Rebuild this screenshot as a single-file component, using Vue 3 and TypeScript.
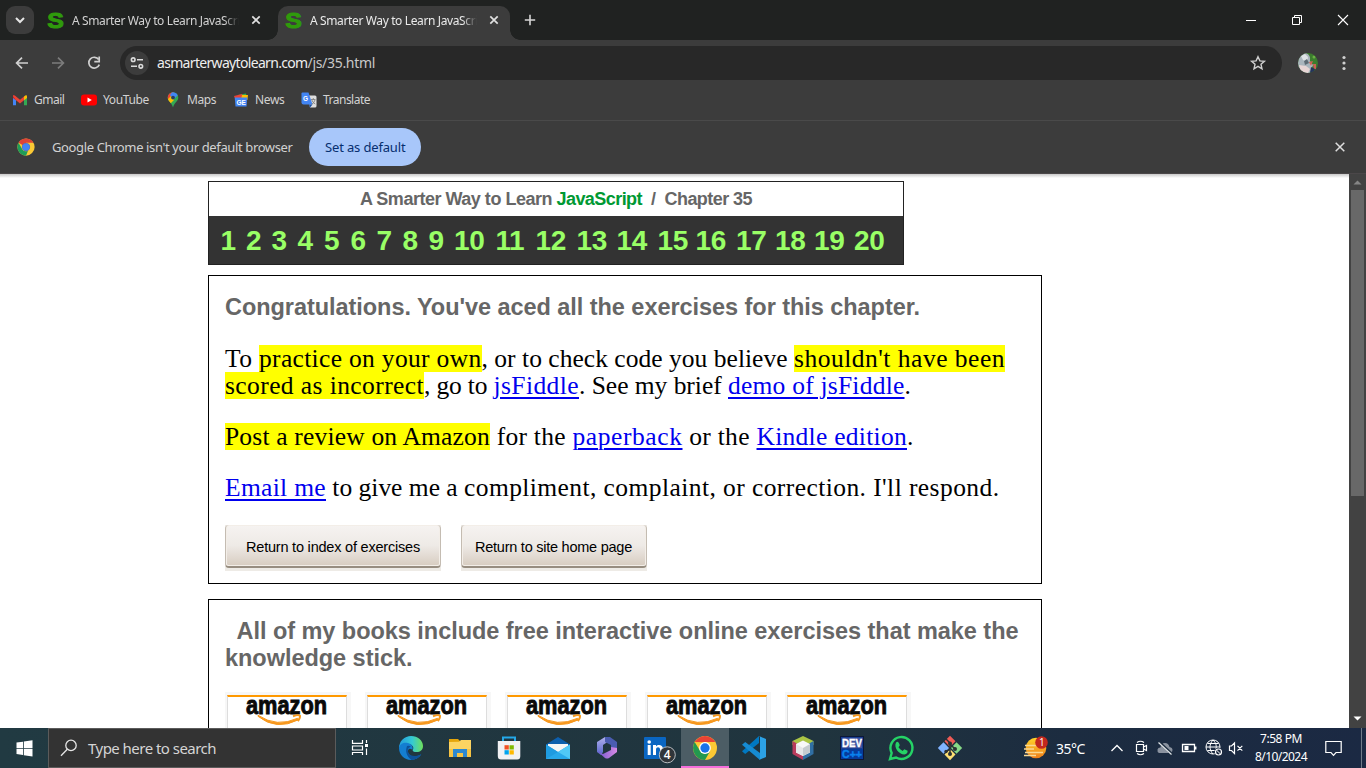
<script setup lang="ts">
import type { Directive } from 'vue'

/* Spreads the letters of a single-line run so that it takes the given width. */
const vFit: Directive<HTMLElement, number> = {
  mounted(el, binding) {
    const natural = el.getBoundingClientRect().width
    const count = (el.textContent || '').length
    if (count > 0) el.style.letterSpacing = `${(binding.value - natural) / count}px`
  },
}

interface Run { t: string; w: number; k?: 'mark' | 'link' }
const paragraphs: Run[][][] = [
  [
    [
      { t: 'To ', w: 34 },
      { t: 'practice on your own', w: 222.5, k: 'mark' },
      { t: ', or to check code you believe ', w: 312.5 },
      { t: "shouldn't have been", w: 211, k: 'mark' },
    ],
    [
      { t: 'scored as incorrect', w: 199, k: 'mark' },
      { t: ', go to ', w: 69.5 },
      { t: 'jsFiddle', w: 85.5, k: 'link' },
      { t: '. See my brief ', w: 149 },
      { t: 'demo of jsFiddle', w: 176.5, k: 'link' },
      { t: '.', w: 6 },
    ],
  ],
  [
    [
      { t: 'Post a review on Amazon', w: 265, k: 'mark' },
      { t: ' for the ', w: 82.5 },
      { t: 'paperback', w: 110, k: 'link' },
      { t: ' or the ', w: 74 },
      { t: 'Kindle edition', w: 150.5, k: 'link' },
      { t: '.', w: 6 },
    ],
  ],
  [
    [
      { t: 'Email me', w: 101, k: 'link' },
      { t: ' to give me a ', w: 138 },
      { t: 'compliment, complaint, ', w: 259 },
      { t: "or correction. I'll respond.", w: 276.5 },
    ],
  ],
]

const numberWidths = [25.5, 25.5, 26, 26.5, 26.5, 26, 26, 26, 25.5, 41.5, 40, 41, 40, 41, 38, 40.5, 39, 39, 40, 32]
const tabTitle = 'A Smarter Way to Learn JavaScript'
const cards = [1, 2, 3, 4, 5]
</script>

<template>
  <div class="screen">
    <header class="tabs">
      <div class="tabsearch"><svg width="28" height="28" viewBox="0 0 28 28"><path d="M10 12l4 4 4-4" fill="none" stroke="#e6e6e6" stroke-width="2" /></svg></div>
      <div v-for="n in 2" :key="n" class="tab" :class="{ active: n === 2 }">
        <svg class="fav" width="17" height="18" viewBox="0 0 17 18"><text x="0.2" y="16.6" font-family="Liberation Sans, sans-serif" font-weight="700" font-size="21.5" textLength="16.6" lengthAdjust="spacingAndGlyphs" fill="#2f9a0c" stroke="#2f9a0c" stroke-width="1">S</text></svg>
        <div class="title"><span v-fit="179">{{ tabTitle }}</span></div>
        <svg class="tabx" width="10" height="10" viewBox="0 0 10 10"><path d="M1.3 1.3l7.4 7.4M8.7 1.3L1.3 8.7" stroke="#e0e0e0" stroke-width="1.7" /></svg>
      </div>
      <svg class="plus" width="12" height="12" viewBox="0 0 12 12"><path d="M6 .8v10.4M.8 6h10.4" stroke="#d6d6d6" stroke-width="1.6" /></svg>
      <div class="win">
        <svg width="12" height="12" viewBox="0 0 12 12"><path d="M1 6.5h10" stroke="#fff" /></svg>
        <svg width="12" height="12" viewBox="0 0 12 12"><path d="M1.5 3.5h7v7h-7zM3.5 3.5v-2h7v7h-2" fill="none" stroke="#fff" /></svg>
        <svg width="12" height="12" viewBox="0 0 12 12"><path d="M1 1l10 10M11 1L1 11" stroke="#fff" stroke-width="1.1" /></svg>
      </div>
    </header>

    <div class="toolbar">
      <svg class="b1" width="16" height="16" viewBox="0 0 16 16"><path d="M14 8H3M8 2.6L2.6 8 8 13.4" fill="none" stroke="#d0d0d0" stroke-width="1.7" /></svg>
      <svg class="b2" width="16" height="16" viewBox="0 0 16 16"><path d="M2 8h11M8 2.6L13.4 8 8 13.4" fill="none" stroke="#7c7c7c" stroke-width="1.7" /></svg>
      <svg class="b3" width="16" height="16" viewBox="0 0 16 16"><path d="M12.7 4.6A5.4 5.4 0 1 0 13.3 9.6" fill="none" stroke="#d0d0d0" stroke-width="1.7" /><path d="M13.2 1.6v5H8.3" fill="none" stroke="#d0d0d0" stroke-width="1.7" /></svg>
      <div class="omni">
        <div class="site"><svg width="16" height="16" viewBox="0 0 16 16" fill="none" stroke="#dadada" stroke-width="1.6"><circle cx="4.2" cy="4.7" r="1.8" /><path d="M8 4.7h6M2 11.3h6" /><circle cx="11.8" cy="11.3" r="1.8" /></svg></div>
        <div class="url"><span v-fit="150.5">asmarterwaytolearn.com</span><span v-fit="67.5" class="path">/js/35.html</span></div>
        <svg class="star" width="16" height="16" viewBox="0 0 16 16"><path d="M8 1.7l1.9 4.2 4.5.4-3.4 3 1 4.5L8 11.4l-4 2.4 1-4.5-3.4-3 4.5-.4z" fill="none" stroke="#d0d0d0" stroke-width="1.4" /></svg>
      </div>
      <svg class="avatar" width="20" height="20" viewBox="0 0 20 20">
        <defs><clipPath id="av"><circle cx="10" cy="10" r="10" /></clipPath></defs>
        <g clip-path="url(#av)"><rect width="20" height="20" fill="#3c7d2e" /><path d="M0 0h8q5 2 4 8l3 4-3 8H0z" fill="#aab5bd" /><path d="M3 3l4-2 3 3-1 5-4-2z" fill="#dfe3e6" /><path d="M6 8l3-2 2 4-4 2z" fill="#5e6b75" /><path d="M1 12l7 1 4 3-2 4H3z" fill="#e8d5d5" /><path d="M11 9l4-1-2 5zM15 11h3v5h-2z" fill="#cd6155" /><path d="M13 14l4 2-2 4h-3z" fill="#25335c" /><circle cx="16" cy="4" r="1.5" fill="#6bb045" /></g>
      </svg>
      <svg class="dots" width="4" height="16" viewBox="0 0 4 16" fill="#d0d0d0"><circle cx="2" cy="2.5" r="1.6" /><circle cx="2" cy="8" r="1.6" /><circle cx="2" cy="13.5" r="1.6" /></svg>
    </div>

    <div class="marks">
      <div class="bm gm"><svg width="16" height="16" viewBox="0 0 16 16"><path d="M1 3.2v10h3V7z" fill="#4285f4" /><path d="M15 3.2v10h-3V7z" fill="#34a853" /><path d="M1 3v3l3 2.3V4.8z" fill="#c5221f" /><path d="M1 4.2Q1 2.5 2.8 3.6L8 7.7l4-3.1v3.7l-4 3.1-4-3.1z" fill="#ea4335" /><path d="M12 4.6l1.2-1Q15 2.8 15 4.7V6l-3 2.3z" fill="#fbbc04" /></svg><span v-fit="30.5">Gmail</span></div>
      <div class="bm yt"><svg width="16" height="16" viewBox="0 0 16 16"><rect x="0" y="2.5" width="16" height="11" rx="3" fill="#f00" /><path d="M6.5 5.5v5L10.8 8z" fill="#fff" /></svg><span v-fit="46">YouTube</span></div>
      <div class="bm mp"><svg width="16" height="16" viewBox="0 0 16 16"><defs><clipPath id="pin"><path d="M8 .3a5.3 5.3 0 0 0-5.3 5.3c0 4 3.9 4.7 5.3 10 1.4-5.3 5.3-6 5.3-10A5.3 5.3 0 0 0 8 .3z" /></clipPath></defs><g clip-path="url(#pin)"><path d="M0 0h16v16H0z" fill="#34a853" /><path d="M0 0h9L4 7 0 8z" fill="#ea4335" /><path d="M7 0h9L8 8 5 3z" fill="#4285f4" /><path d="M2 8l4-4 3 4-5 5z" fill="#fbbc04" /></g><circle cx="8" cy="5.6" r="1.9" fill="#263e63" /></svg><span v-fit="29">Maps</span></div>
      <div class="bm nw"><svg width="16" height="16" viewBox="0 0 16 16"><path d="M5 3l8-1.5 1 5H5z" fill="#34a853" /><path d="M1 4l8-2 2 6-8 1z" fill="#ea4335" /><path d="M9 3h6l-.6 5H8z" fill="#fbbc04" /><path d="M1.7 5.5h12.6l-.8 9h-11z" fill="#4285f4" /><text x="3.5" y="12.6" font-family="Liberation Sans" font-weight="700" font-size="6.5" fill="#fff">GE</text></svg><span v-fit="29.5">News</span></div>
      <div class="bm tr"><svg width="16" height="16" viewBox="0 0 16 16"><path d="M6 3.5h8q1.5 0 1.5 1.5v9q0 1.5-1.5 1.5H9z" fill="#dedede" /><path d="M.5 1.5Q.5.5 1.5.5h6l4 12h-9q-2 0-2-2z" fill="#4285f4" /><path d="M8 12.5h3.5L9 15.5z" fill="#174ea6" /><text x="2" y="8.6" font-family="Liberation Sans" font-weight="700" font-size="6.5" fill="#fff">G</text><path d="M10 7.5h4.5M12.3 6v1.5M10.8 8q1 3 3.5 4M14 8q-.8 3-3.4 4.3" stroke="#777" fill="none" stroke-width=".8" /></svg><span v-fit="47">Translate</span></div>
    </div>

    <div class="infobar">
      <svg width="18" height="18" viewBox="0 0 48 48"><circle cx="24" cy="24" r="23" fill="#fbc934" /><path d="M24 24L4.1 12.5A23 23 0 0 1 43.9 12.5H24z" fill="#dc4437" /><path d="M24 47A23 23 0 0 1 4.1 12.5L14 29.7Q18 36 24 35.5l5-1z" fill="#1e9d58" /><circle cx="24" cy="24" r="11" fill="#5b6fae" /><circle cx="24" cy="24" r="9.5" fill="#4285f4" /></svg>
      <div class="msg"><span v-fit="240.5">Google Chrome isn't your default browser</span></div>
      <div class="setdef"><span v-fit="80.5">Set as default</span></div>
      <svg class="infx" width="10" height="10" viewBox="0 0 10 10"><path d="M.7.7l8.6 8.6M9.3.7L.7 9.3" stroke="#dedede" stroke-width="1.5" /></svg>
    </div>

    <main class="page">
      <div class="doc">
        <div class="banner">
          <div class="booktitle"><span v-fit="196.5">A Smarter Way to Learn </span><span v-fit="85.5" class="green">JavaScript</span><span v-fit="22.5">&nbsp; / &nbsp;</span><span v-fit="87.5">Chapter 35</span></div>
          <div class="numbers"><span v-for="(w, i) in numberWidths" :key="i" :style="{ width: w + 'px' }">{{ i + 1 }}</span></div>
        </div>
        <section class="box first">
          <h2><span v-fit="695">Congratulations. You've aced all the exercises for this chapter.</span></h2>
          <div v-for="(p, pi) in paragraphs" :key="pi" class="para">
            <div v-for="(line, li) in p" :key="li" class="line">
              <span v-for="(r, ri) in line" :key="ri" v-fit="r.w" :class="r.k">{{ r.t }}</span>
            </div>
          </div>
          <div class="buttons">
            <div class="btn wide"><div><span v-fit="174">Return to index of exercises</span></div></div>
            <div class="btn"><div><span v-fit="157">Return to site home page</span></div></div>
          </div>
        </section>
        <section class="box second">
          <h2 class="indent"><span v-fit="782">All of my books include free interactive online exercises that make the</span></h2>
          <h2><span v-fit="187.5">knowledge stick.</span></h2>
          <div class="cards">
            <div v-for="c in cards" :key="c" class="card"><div class="inner">
              <svg width="118" height="50" viewBox="0 0 118 50"><text x="18" y="17" font-family="Liberation Sans, sans-serif" font-weight="700" font-size="25.5" textLength="81" lengthAdjust="spacingAndGlyphs" fill="#090909" stroke="#090909" stroke-width=".9">amazon</text><path d="M30 18.3Q49 30.8 69.5 21.3L70.5 22.8Q48 34 30 19.3z" fill="#f7981d" stroke="#f7981d" stroke-width="1" /><path d="M65 19.3q5.5-2 7-.5.5 2-2.2 5.3" fill="none" stroke="#f7981d" stroke-width="2" /></svg>
            </div></div>
          </div>
        </section>
      </div>
      <div class="scroll">
        <svg width="9" height="5" viewBox="0 0 9 5"><path d="M.5 4.5h8L4.5.5z" fill="#858585" /></svg>
        <div class="thumb"></div>
        <svg class="dn" width="9" height="5" viewBox="0 0 9 5"><path d="M.5.5h8l-4 4z" fill="#fff" /></svg>
      </div>
    </main>

    <footer class="task">
      <div class="start"><svg width="17" height="17" viewBox="0 0 17 17" fill="#fff"><path d="M.5 2.6L7 1.7v6.2H.5zM7.8 1.5L16.5.3v7.6H7.8zM.5 8.8H7V15l-6.5-.9zM7.8 8.8h8.7v7.6l-8.7-1.2z" /></svg></div>
      <div class="search"><svg width="18" height="18" viewBox="0 0 18 18" fill="none" stroke="#e6e6e6" stroke-width="1.3"><circle cx="11" cy="6.4" r="5.2" /><path d="M7.3 10.2L1 16.8" /></svg><span v-fit="128">Type here to search</span></div>
      <div class="tv"><svg width="18" height="18" viewBox="0 0 18 18" fill="none" stroke="#fff" stroke-width="1.2"><path d="M1.5 1v3.4h10V1M1.5 16v-2.5h10V16M1.5 7h10v4h-10zM15.5 1v3M15.5 9.5V16" /><path d="M14 5h3v3h-3z" fill="#fff" stroke="none" /></svg></div>
      <div class="apps">
        <div class="app"><svg width="24" height="24" viewBox="0 0 24 24"><defs><linearGradient id="eg" x1="0" x2="1"><stop offset="0" stop-color="#229bdd" /><stop offset=".55" stop-color="#35c9d4" /><stop offset="1" stop-color="#6fe05b" /></linearGradient></defs><path d="M0 12A12 12 0 0 1 12 0c7 0 12 4.6 12 10 0 4-3 6-6.3 6-3 0-4.4-1-4-2.1 2-3-1-6-4.7-6C4 7.9 1 10 0 12z" fill="url(#eg)" /><path d="M0 12c.5-4 5-6 9-5 3.5 1 5.6 4 4.4 6.8C10 11 8 14 9.4 17.3c1.7 4 7 4.9 12.9 1C20 22 16 24 12 24 5.4 24 0 18.6 0 12z" fill="#147ed1" /><path d="M8 10c-2 5-.5 10.4 4.5 13.9C16 24 20 22 22.3 18.3c-6 3-11 2-12.9-1.5C8 13.5 9.5 11 12 11q-2-2-4-1z" fill="#0d5199" /></svg></div>
        <div class="app"><svg width="24" height="24" viewBox="0 0 24 24"><path d="M1 3h9l2 2v3H1z" fill="#e5a50a" /><path d="M1 6l10-.2L13 4h10v17H1z" fill="#fcd462" /><path d="M1 13h22v8H1z" fill="#f5c343" /><path d="M5 21v-8h14v8h-4v-4H9v4z" fill="#2b88d0" /></svg></div>
        <div class="app"><svg width="24" height="24" viewBox="0 0 24 24"><path d="M6 7V1.5h12V7" fill="none" stroke="#24a8e8" stroke-width="2" /><path d="M.8 5h22.5v15q0 3.5-3 3.5H4q-3.2 0-3.2-3.5z" fill="#f1f1f3" /><path d="M7.5 9.2h4.3v4.3H7.5z" fill="#f25022" /><path d="M12.5 9.2h4.3v4.3h-4.3z" fill="#7fba00" /><path d="M7.5 14.2h4.3v4.3H7.5z" fill="#00a4ef" /><path d="M12.5 14.2h4.3v4.3h-4.3z" fill="#ffb900" /></svg></div>
        <div class="app"><svg width="24" height="24" viewBox="0 0 24 24"><path d="M0 8.5L12 1l12 7.5v6H0z" fill="#0d5fad" /><path d="M2 8h20v3l-10 6L2 11z" fill="#f5f5f5" /><path d="M0 8.5L12 16 24 8.5V23H0z" fill="#28a8ea" /><path d="M0 23L12 16 0 8.5z" fill="#1f9be0" /><path d="M24 8.5V23L12 16z" fill="#50c8f6" /></svg></div>
        <div class="app"><svg width="24" height="24" viewBox="0 0 24 24"><defs><linearGradient id="ma" x1="0" y1="0" x2="0" y2="1"><stop offset="0" stop-color="#b1b0ed" /><stop offset="1" stop-color="#5866cc" /></linearGradient><linearGradient id="mb" x1="0" x2="1"><stop offset="0" stop-color="#6d55cc" /><stop offset="1" stop-color="#d98ae5" /></linearGradient></defs><path d="M10 1L2 6v10l4 3 2-3V9l6-4V1z" fill="url(#ma)" /><path d="M10 1h5l7 5v9l-6 1V9l-6-3z" fill="#4a5cb0" /><path d="M2 15l6 3 8-4v-3l6 1v4l-8 6q-2 1-4 0z" fill="url(#mb)" /></svg></div>
        <div class="app"><svg width="34" height="28" viewBox="0 0 34 28" class="li"><rect x="1" y="1" width="22" height="22" rx="1" fill="#0a66c2" /><circle cx="6.2" cy="6" r="1.8" fill="#fff" /><path d="M4.7 9h3v10h-3zM10 9h3v1.4c2-2.6 7-1.8 7 2.6v6h-3v-5.4c0-3-4-3-4 0V19h-3z" fill="#fff" /><circle cx="24.3" cy="18.8" r="8" fill="#30353a" stroke="#b7bcc0" /><text x="20.8" y="23.2" font-family="Open Sans, sans-serif" font-weight="600" font-size="12" fill="#fff">4</text></svg></div>
        <div class="app on"><svg width="24" height="24" viewBox="0 0 48 48"><circle cx="24" cy="24" r="24" fill="#fcc934" /><path d="M24 12.5L3.3 12A24 24 0 0 1 44.8 12H24z" fill="#ea4335" /><path d="M24 48A24 24 0 0 1 3.3 12L14 29.7Q18 36 24 35.5l10-5z" fill="#23994f" /><circle cx="24" cy="24" r="11.8" fill="#fff" /><circle cx="24" cy="24" r="9.3" fill="#1a73e8" /></svg></div>
        <div class="app"><svg width="24" height="24" viewBox="0 0 24 24"><path d="M17 0v7L3.2 18 0 15.3z" fill="#0078c1" /><path d="M0 8.8L3.2 6 18 17v7z" fill="#168bd2" /><path d="M17 0l7 3v18l-7 3 1-1V1z" fill="#2ca2e6" /></svg></div>
        <div class="app"><svg width="24" height="24" viewBox="0 0 24 24"><path d="M12 0l10.5 5v4H1.5V5z" fill="#aac545" /><path d="M1.5 5L12 11v13L1.5 18z" fill="#b93b5c" /><path d="M22.5 5L12 11v13l10.5-6z" fill="#306fa4" /><path d="M12 4.5L19 8v8.5L12 20l-7-3.5V8z" fill="#f8f8f8" /><path d="M12 12l7-4v8.5L12 20z" fill="#c6ccd0" /><path d="M5 8l7 4v8l-7-3.5z" fill="#e6e7e8" /></svg></div>
        <div class="app"><svg width="24" height="24" viewBox="0 0 24 24"><rect x=".5" y=".5" width="23" height="23" fill="#1a3f92" stroke="#0c1739" /><rect x="2" y="2" width="20" height="10" fill="#4256a0" /><rect x="1" y="13" width="22" height="10" fill="#063b9b" /><text x="2" y="11" font-family="Liberation Sans" font-weight="700" font-size="10" textLength="20" lengthAdjust="spacingAndGlyphs" fill="#fff" stroke="#fff" stroke-width=".3">DEV</text><text x="2" y="22" font-family="Liberation Sans" font-weight="700" font-size="10.5" textLength="20" lengthAdjust="spacingAndGlyphs" fill="#0982ee" stroke="#0982ee" stroke-width=".4">C++</text></svg></div>
        <div class="app"><svg width="26" height="26" viewBox="0 0 26 26"><path d="M2 24l1.7-6A11 11 0 1 1 8 22.5z" fill="none" stroke="#25d366" stroke-width="2.4" /><path d="M8 7.5q2-1.8 3 .8l.8 2-1.3 1.9q1.5 2.5 4.1 3.7l1.7-1.7 3.3 1.6q.2 3.2-3.2 3.8C11 19.5 5.5 12.5 8 7.5z" fill="#25d366" /></svg></div>
        <div class="app"><svg width="26" height="26" viewBox="0 0 26 26"><path d="M13 .8l5.5 5.5L13 12 7.5 6.3z" fill="#f05b56" /><path d="M6.5 7.3L12 13l-5.5 5.7L.8 13z" fill="#80b3ff" /><path d="M19.5 7.3l5.7 5.7-5.7 5.7L14 13z" fill="#87d987" /><path d="M13 14l5.5 5.5L13 25.2 7.5 19.5z" fill="#ffe073" /><path d="M9 4l4 4v11M13 9l5 5M13 14l-4 3" stroke="#2b3035" stroke-width="1.5" fill="none" /><g fill="#2b3035"><circle cx="13" cy="8.5" r="2" /><circle cx="18" cy="14" r="2" /><circle cx="13" cy="19" r="2" /><circle cx="9" cy="16.5" r="1.7" /></g></svg></div>
      </div>
      <svg class="weather" width="26" height="24" viewBox="0 0 26 24"><defs><linearGradient id="sun" x1="0" y1="0" x2="0" y2="1"><stop offset="0" stop-color="#ffd42a" /><stop offset="1" stop-color="#ee7d1a" /></linearGradient></defs><circle cx="13" cy="12" r="10.3" fill="url(#sun)" /><path d="M2 9.5h12M1 13h10M2 16.5h18M1 19.5h12" stroke="#f9d893" stroke-width="1.4" /><circle cx="18.5" cy="6.5" r="6.3" fill="#c4281d" /><text x="16" y="10.3" font-family="Open Sans" font-size="10" fill="#fff">1</text></svg>
      <div class="temp"><span v-fit="29">35°C</span></div>
      <div class="tray">
        <svg width="16" height="16" viewBox="0 0 16 16"><path d="M2.5 11L8 5.5l5.5 5.5" fill="none" stroke="#fff" stroke-width="1.3" /></svg>
        <svg width="16" height="16" viewBox="0 0 16 16"><path d="M3.5 4.5h7v7h-7zM10.5 7l3-1.5v5l-3-1.5M4 2.5Q7.5 0 11 2.5M4 13.5q3.5 2.5 7 0" fill="none" stroke="#fff" stroke-width="1.2" /></svg>
        <svg width="16" height="16" viewBox="0 0 16 16"><path d="M2 13q-2-1-1.5-3.5Q1 7.5 3.5 7.5 4 3 8 3q3.5 0 4.5 4 3 .5 3 3t-2 3z" fill="#8a929f" /><path d="M2.5 2.5l13 12" stroke="#1d2d40" stroke-width="2.6" /><path d="M1.5 2.5l13 12" stroke="#e3e7ea" stroke-width="1.2" /></svg>
        <svg width="16" height="16" viewBox="0 0 16 16"><path d="M1.5 4.5h12v7h-12zM14.8 6.5v3" fill="none" stroke="#fff" stroke-width="1.3" /><path d="M3.5 6h4v4h-4z" fill="#fff" /></svg>
        <svg width="18" height="18" viewBox="0 0 18 18" fill="none" stroke="#fff"><circle cx="8" cy="8" r="7" /><path d="M1 8h14M2.5 4.5h11M2.5 11.5h8M8 1C4 5 4 11 8 15M8 1c3.3 3.2 3.6 6 3 9" /><circle cx="13.5" cy="13" r="4.2" fill="#1d2a40" stroke="none" /><circle cx="13.5" cy="13" r="3" stroke-width="1.2" /><path d="M11.4 11l4.2 4.1" /></svg>
        <svg width="16" height="16" viewBox="0 0 16 16" fill="none" stroke="#fff" stroke-width="1.2"><path d="M1.5 6h2l3-3v10.5l-3-3h-2zM9.5 5.8l4.8 4.8M14.3 5.8l-4.8 4.8" /></svg>
      </div>
      <div class="clock"><div><span v-fit="42">7:58 PM</span></div><div><span v-fit="52">8/10/2024</span></div></div>
      <svg class="note" width="17" height="17" viewBox="0 0 17 17"><path d="M.8 1.5h15.4v11h-5.2L8.5 15.3 6 12.5H.8z" fill="none" stroke="#fff" stroke-width="1.2" /></svg>
      <div class="peek"></div>
    </footer>
  </div>
</template>

<style>
body { margin: 0; overflow: hidden; }
</style>
<style scoped>
.screen { width: 1366px; height: 768px; display: flex; flex-direction: column; overflow: hidden; background: #3c3c3c; font-family: "Noto Sans", "Open Sans", sans-serif; font-size: 12px; color: #d2d2d2; }
.screen *, .screen { box-sizing: border-box; }
span { white-space: pre; }
svg { display: block; flex: none; overflow: visible; }
.tabs { height: 40px; flex: none; background: #202221; display: flex; align-items: center; position: relative; }
.tabsearch { width: 28px; height: 28px; margin-left: 6px; border-radius: 9px; background: #3c3c3c; }
.tab { width: 232px; height: 34px; margin-top: 6px; display: flex; align-items: center; padding: 0 0 6px 7px; border-radius: 10px 10px 0 0; position: relative; }
.tab:nth-of-type(2) { margin-left: 6px; }
.tab.active { background: #3c3c3c; margin-left: 6px; color: #eaeaea; }
.tab.active::before, .tab.active::after { content: ""; position: absolute; bottom: 0; width: 10px; height: 10px; }
.tab.active::before { left: -10px; background: radial-gradient(circle at 0 0, transparent 9.5px, #3c3c3c 10px); }
.tab.active::after { right: -10px; background: radial-gradient(circle at 100% 0, transparent 9.5px, #3c3c3c 10px); }
.title { width: 167px; margin-left: 8px; height: 20px; line-height: 20px; padding-top: 1px; overflow: hidden; -webkit-mask-image: linear-gradient(90deg, #000 91%, transparent); mask-image: linear-gradient(90deg, #000 91%, transparent); }
.tabx { margin-left: 12px; }
.plus { margin-left: 14px; }
.win { margin-left: auto; display: flex; gap: 34px; padding-right: 17px; }
.toolbar { height: 46px; flex: none; display: flex; align-items: center; }
.b1 { margin-left: 14px; }
.b2 { margin-left: 20px; }
.b3 { margin-left: 20px; }
.omni { width: 1162px; height: 34px; margin-left: 18px; border-radius: 17px; background: #282828; display: flex; align-items: center; }
.site { width: 24px; height: 24px; margin-left: 5px; border-radius: 12px; background: #3c3c3c; display: flex; align-items: center; justify-content: center; }
.url { margin-left: 8px; font-size: 14px; color: #eee; display: flex; padding-bottom: 1px; }
.path { color: #c9c9c9; }
.star { margin-left: auto; margin-right: 16px; }
.avatar { margin-left: 16px; }
.dots { margin-left: 24px; }
.marks { height: 34px; flex: none; display: flex; padding-bottom: 6px; align-items: center; }
.bm { display: flex; align-items: center; gap: 6px; }
.bm span { padding-bottom: 1px; }
.gm { margin-left: 12px; width: 69px; }
.yt { width: 84px; }
.mp { width: 68px; }
.nw { width: 68px; }
.infobar { height: 54px; flex: none; border-top: 1px solid #4a4a4a; display: flex; align-items: center; padding-left: 17px; font-size: 13px; border-bottom: 1px solid #4b4749; }
.msg { margin-left: 17px; width: 241px; }
.setdef { width: 112px; height: 38px; margin-left: 16px; border-radius: 19px; background: #a8c7fa; color: #062e6f; display: flex; align-items: center; padding-left: 16px; }
.infx { margin-left: auto; margin-right: 21px; }
.page { height: 554px; flex: none; display: flex; background: linear-gradient(#c9c9c9, #fff 4px); overflow: hidden; }
.doc { width: 1349px; padding: 7px 0 0 208px; }
.banner { width: 696px; height: 84px; border: 1px solid #222; background: #333; }
.booktitle { height: 34px; background: #fff; color: #666; font: 700 18px/34px "Liberation Sans", Arial, sans-serif; display: flex; padding-left: 151px; }
.green { color: #093; }
.numbers { display: flex; padding-left: 11.4px; font: 700 28px/49px "Liberation Sans", Arial, sans-serif; color: #9f6; }
.numbers span { flex: none; letter-spacing: -.3px; }
.box { width: 834px; border: 1px solid #000; background: #fff; padding-left: 16px; }
.first { height: 309px; margin-top: 10px; padding-top: 18px; }
.second { height: 309px; margin-top: 15px; padding-top: 18px; }
h2 { margin: 0; height: 27px; font: 700 23.5px/27px "Liberation Sans", Arial, sans-serif; color: #666; }
.indent { padding-left: 11.5px; }
.para { margin-top: 24px; font: 25.5px/27px "Liberation Serif", "Times New Roman", serif; color: #000; }
.line { display: flex; height: 27px; }
.line span { flex: none; height: 27px; }
.mark { background: #ff0; }
.link { color: #0000ee; text-decoration: underline; text-decoration-thickness: 2px; text-underline-offset: 3px; }
.buttons { display: flex; gap: 20px; margin-top: 24px; }
.btn { width: 186px; height: 46px; padding: 0 0 3px; background: #eeebe6; }
.btn.wide { width: 216px; }
.btn div { height: 43px; border: 1px solid #c4bcb2; border-top: 0; border-bottom: 2px solid #978d80; border-radius: 4px; box-shadow: inset 0 0 0 1px #f3eee8; background: linear-gradient(#f6f3f1, #eeeae6 50%, #d7ccc0); font: 14.5px/44px "Liberation Sans", Arial, sans-serif; color: #000; padding-left: 13px; }
.btn.wide div { padding-left: 20px; }
.cards { display: flex; gap: 14px; margin-top: 20px; }
.card { width: 126px; height: 160px; background: #f7f7f7; padding: 3px 4px 0 2px; }
.inner { height: 150px; background: #fff; border: 1px solid #ddd; border-top: 2px solid #f90; overflow: hidden; }
.scroll { width: 17px; background: #424242; display: flex; flex-direction: column; align-items: center; padding-top: 6px; }
.thumb { width: 13px; height: 306px; margin-top: 5px; background: #686868; }
.dn { margin-top: auto; margin-bottom: 7px; }
.task { height: 40px; flex: none; background: linear-gradient(90deg, #213a42, #20343e 60%, #1c2c40 78%, #1b2943); display: flex; align-items: center; }
.start { width: 48px; display: flex; justify-content: center; }
.search { width: 288px; height: 40px; background: #333; border: 1px solid #5b5b5b; display: flex; align-items: center; padding-left: 11px; gap: 10px; font-size: 15px; color: #d5d5d5; }
.tv { width: 50px; padding-left: 15px; }
.apps { display: flex; height: 40px; }
.app { width: 49px; display: flex; align-items: center; justify-content: center; }
.li { margin-left: 8px; margin-top: 3px; }
.on { width: 48px; margin: 0 1px 0 0; background: #4c5d65; border-bottom: 2px solid #f56edb; padding-top: 2px; position: relative; left: 1px; }
.weather { margin-left: 49px; }
.temp { margin-left: 7px; width: 29px; font-size: 14px; color: #fff; }
.tray { margin-left: 24px; display: flex; align-items: center; gap: 8px; width: 136px; }
.tray svg:nth-child(5) { margin-right: -3px; }
.clock { width: 52px; margin-left: 10px; text-align: center; color: #fff; font-size: 12px; line-height: 18px; }
.clock div { display: flex; justify-content: center; }
.note { margin-left: 18px; }
.peek { width: 1px; height: 40px; background: #6f7b89; margin-left: 19px; }
</style>
